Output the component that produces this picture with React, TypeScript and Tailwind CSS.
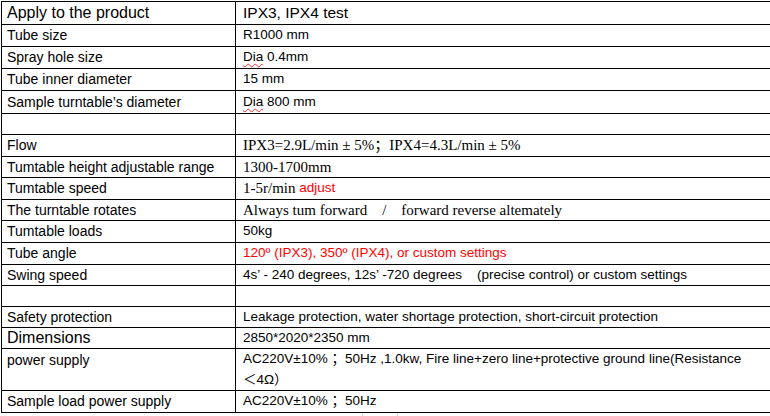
import * as React from "react";

const sans = "font-['Liberation_Sans','Noto_Sans_CJK_SC',sans-serif]";
const serif = "font-['Liberation_Serif','Noto_Sans_CJK_SC',serif]";

function Dia() {
  return (
    <span className="underline decoration-wavy decoration-red-500 decoration-1 underline-offset-2">
      Dia
    </span>
  );
}

type Row = {
  label: React.ReactNode;
  value: React.ReactNode;
  h: string;
  labelCls?: string;
  valueCls?: string;
  top?: boolean;
};

const rows: Row[] = [
  { label: "Apply to the product", value: "IPX3, IPX4 test", h: "h-[23px]", labelCls: "text-[16px]", valueCls: "text-[15.5px]" },
  { label: "Tube size", value: "R1000 mm", h: "h-[22px]" },
  { label: "Spray hole size", value: <><Dia /> 0.4mm</>, h: "h-[22px]" },
  { label: "Tube inner diameter", value: "15 mm", h: "h-[22px]" },
  { label: "Sample turntable’s diameter", value: <><Dia /> 800 mm</>, h: "h-[23px]" },
  { label: "", value: "", h: "h-[21px]" },
  {
    label: "Flow",
    value: "IPX3=2.9L/min ± 5%；IPX4=4.3L/min ± 5%",
    h: "h-[22px]",
    valueCls: `${serif} text-[15px]`,
  },
  { label: "Tumtable height adjustable range", value: "1300-1700mm", h: "h-[21px]", valueCls: `${serif} text-[15px]` },
  {
    label: "Tumtable speed",
    value: (
      <>
        <span className={`${serif} text-[15px]`}>1-5r/min </span>
        <span className="text-[#ff0000]">adjust</span>
      </>
    ),
    h: "h-[22px]",
  },
  {
    label: "The turntable rotates",
    value: "Always tum forward    /    forward reverse altemately",
    h: "h-[21px]",
    valueCls: `${serif} text-[15px]`,
  },
  { label: "Tumtable loads", value: "50kg", h: "h-[22px]" },
  {
    label: "Tube angle",
    value: "120º (IPX3), 350º (IPX4), or custom settings",
    h: "h-[22px]",
    valueCls: "text-[13.5px] text-[#ff0000]",
  },
  {
    label: "Swing speed",
    value: "4s’ - 240 degrees, 12s’ -720 degrees    (precise control) or custom settings",
    h: "h-[21px]",
  },
  { label: "", value: "", h: "h-[21px]" },
  {
    label: "Safety protection",
    value: "Leakage protection, water shortage protection, short-circuit protection",
    h: "h-[21px]",
  },
  { label: "Dimensions", value: "2850*2020*2350 mm", h: "h-[21px]", labelCls: "text-[16px]" },
  {
    label: "power supply",
    value: (
      <>
        <div className="h-[21px] flex items-center">
          AC220V±10% ；50Hz ,1.0kw, Fire line+zero line+protective ground line(Resistance
        </div>
        <div className="h-[20px] flex items-center">＜4Ω）</div>
      </>
    ),
    h: "h-[42px]",
    top: true,
  },
  { label: "Sample load power supply", value: "AC220V±10% ；50Hz", h: "h-[22px]" },
];

export default function App() {
  return (
    <div className={`w-[770px] h-[416px] overflow-hidden bg-white text-black ${sans}`}>
      <div className="ml-px mt-px w-[900px] border-t border-l border-black">
        {rows.map((r, i) => (
          <div key={i} className={`flex border-b border-black ${r.h}`}>
            <div
              className={`w-[234px] shrink-0 border-r border-black pl-[5px] flex whitespace-pre ${
                r.top ? "items-start pt-[1px]" : "items-center"
              } ${r.labelCls ?? "text-[14px]"}`}
            >
              {r.top ? <div className="h-[21px] flex items-center">{r.label}</div> : r.label}
            </div>
            <div
              className={`flex-1 pl-[7px] whitespace-pre ${
                r.top ? "flex flex-col" : "flex items-center"
              } ${r.valueCls ?? "text-[13.5px]"}`}
            >
              {r.value}
            </div>
          </div>
        ))}
      </div>
      <div className="ml-[362px] w-[36px] h-[3px] border-l border-r border-gray-300" />
    </div>
  );
}
